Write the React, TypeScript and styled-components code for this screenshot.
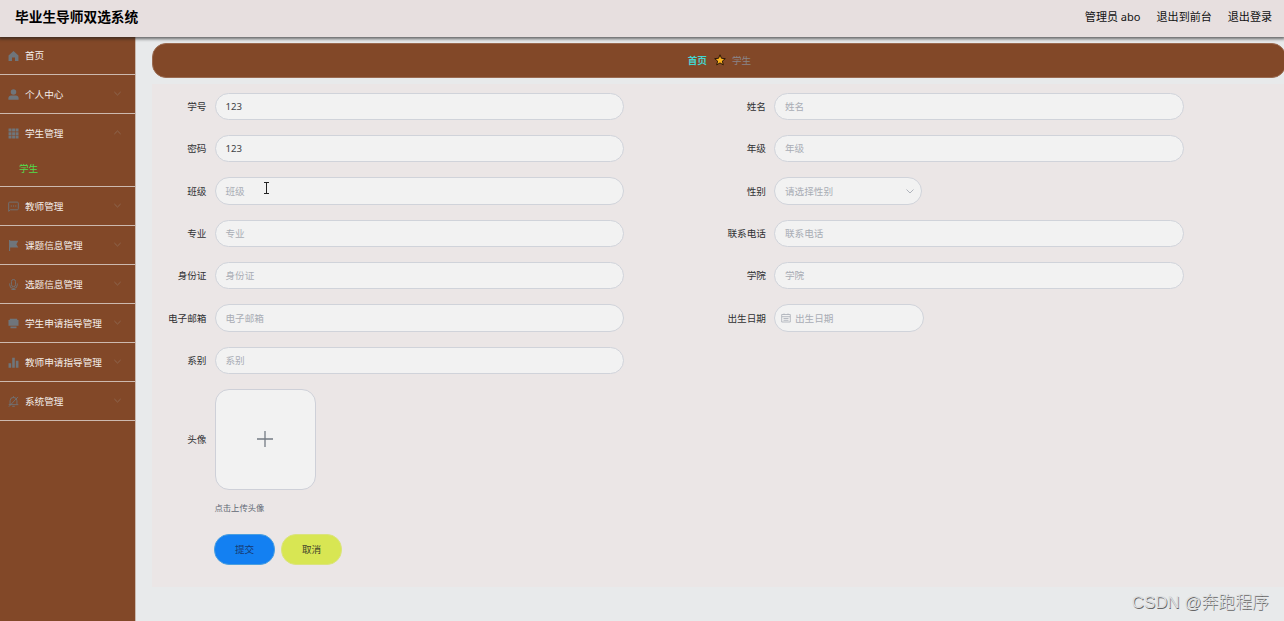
import React from "react";
import styled, { createGlobalStyle, css } from "styled-components";

const GlobalStyle = createGlobalStyle`
  * { box-sizing: border-box; }
  html, body { margin: 0; padding: 0; }
  body {
    width: 1284px;
    height: 621px;
    overflow: hidden;
    background: #e8eaeb;
    font-family: "Noto Sans", "Noto Sans CJK SC", sans-serif;
    font-size: 9.65px;
    color: #303133;
  }
`;

const Page = styled.div`
  position: relative;
  display: flex;
  flex-direction: column;
  width: 1284px;
  height: 621px;
  overflow: hidden;
`;

const Header = styled.header`
  position: relative;
  z-index: 2;
  flex: none;
  display: flex;
  align-items: center;
  justify-content: space-between;
  height: 37px;
  padding: 0 12px 4px 15px;
  background: #e7dfdf;
  box-shadow: 0 1px 3px 1px rgba(30, 30, 30, 0.65);
`;

const Title = styled.h1`
  margin: 0;
  font-size: 13.7px;
  line-height: 20px;
  font-weight: 700;
  color: #000;
`;

const HeaderLinks = styled.nav`
  display: flex;
  gap: 16px;
  font-size: 11.05px;
  line-height: 16px;
  color: #111;
`;

const Body = styled.div`
  flex: 1;
  display: flex;
  min-height: 0;
`;

const Sidebar = styled.aside`
  flex: none;
  width: 136px;
  background: #824828;
  border-right: 1px solid #c9b8ae;
`;

const MenuGroup = styled.div<{ $first?: boolean }>`
  border-bottom: 1px solid #cdb9ae;
  padding-top: ${(p) => (p.$first ? 0 : 1)}px;
`;

const MenuItem = styled.div`
  display: flex;
  align-items: center;
  height: 37px;
  padding: 0 13px 0 8px;
  color: #f4eeea;
`;

const MenuText = styled.span`
  flex: 1;
  margin-left: 6px;
  padding-bottom: 2px;
  white-space: nowrap;
`;

const SubItem = styled.div`
  height: 34px;
  padding: 9px 0 0 19px;
  line-height: 16px;
  color: #52dc4c;
`;

const Icon = styled.svg`
  flex: none;
  display: block;
  width: 11px;
  height: 11px;
  color: #6f757b;
`;

const Arrow = styled.svg<{ $up?: boolean }>`
  flex: none;
  width: 9px;
  height: 9px;
  margin-top: -3px;
  color: #8f6a54;
  transform: ${(p) => (p.$up ? "rotate(180deg)" : "none")};
`;

const Main = styled.main`
  flex: none;
  width: 1150px;
  padding: 6px 0 0 16px;
`;

const Crumbs = styled.div`
  display: flex;
  align-items: center;
  justify-content: center;
  gap: 6.5px;
  height: 35px;
  padding: 0 0 1px 1px;
  border: 1px solid #9a6a50;
  border-radius: 14px;
  background: #824828;
  color: #8a8489;
`;

const CrumbHome = styled.span`
  color: #45d5d0;
  font-weight: 700;
`;

const Star = styled.svg`
  width: 12px;
  height: 12px;
`;

const Card = styled.form`
  height: 503px;
  margin-top: 6px;
  padding: 8.5px 0 0;
  background: #ebe6e6;
`;

const Fields = styled.div`
  display: grid;
  grid-template-columns: 559.5px 559.5px;
  grid-auto-rows: 27.5px;
  row-gap: 14.85px;
`;

const Field = styled.div<{ $solo?: boolean }>`
  display: flex;
  align-items: center;
  ${(p) => p.$solo && css`grid-column: 1 / -1;`}
`;

const Label = styled.label`
  flex: none;
  width: 62.5px;
  padding: 0 8px 0.5px 0;
  text-align: right;
  white-space: nowrap;
  color: #303133;
`;

const Control = styled.div<{ $w?: number; $filled?: boolean; $icon?: boolean }>`
  display: flex;
  align-items: center;
  justify-content: space-between;
  width: ${(p) => p.$w ?? 409.5}px;
  height: 27.5px;
  padding: 0 ${(p) => (p.$icon ? 6 : 10)}px 0.5px;
  border: 1px solid #d0d3da;
  border-radius: 14px;
  background: #f2f2f2;
  color: ${(p) => (p.$filled ? "#404246" : "#a9adb5")};
`;

const DateText = styled.span`
  flex: 1;
  margin-left: 4px;
`;

const ControlIcon = styled.svg<{ $edge?: boolean }>`
  flex: none;
  width: 10px;
  height: 10px;
  margin-right: ${(p) => (p.$edge ? -4 : 0)}px;
  color: #b0b4bc;
`;

const UploadRow = styled.div`
  display: flex;
  align-items: center;
  margin-top: 15px;
`;

const Upload = styled.div`
  display: flex;
  align-items: center;
  justify-content: center;
  width: 101px;
  height: 101px;
  padding: 0 1px 1px 0;
  border: 1px solid #ced0d8;
  border-radius: 14px;
  background: #f2f2f2;
  color: #747b84;
`;

const Hint = styled.div`
  margin: 10px 0 0 62.4px;
  font-size: 8.35px;
  line-height: 16px;
  color: #606874;
`;

const Actions = styled.div`
  display: flex;
  gap: 6px;
  margin: 18px 0 0 62px;
`;

const Button = styled.button<{ $primary?: boolean }>`
  width: 61px;
  height: 31px;
  padding: 0 0 1px;
  border: 1px solid ${(p) => (p.$primary ? "#4a9fe0" : "#dbe47c")};
  border-radius: 15px;
  background: ${(p) => (p.$primary ? "#1380f2" : "#d8e653")};
  color: ${(p) => (p.$primary ? "#173a70" : "#3f432c")};
  font: inherit;
`;

const Watermark = styled.div`
  position: absolute;
  z-index: 3;
  right: 15px;
  bottom: 6px;
  font-family: "Liberation Sans", "Noto Sans CJK SC", sans-serif;
  font-size: 16.9px;
  line-height: 24px;
  white-space: nowrap;
  color: #dcdedf;
  font-weight: 300;
  text-shadow: 0.7px 0.7px 0.6px #666;
`;

const Cursor = styled.svg`
  position: absolute;
  z-index: 3;
  left: 263px;
  top: 182px;
  width: 7px;
  height: 12px;
`;

const icons: Record<string, React.ReactNode> = {
  home: <path fill="currentColor" d="M8 1.500.8 8v7.900h5V11h4.400v4.900h5V8z" />,
  user: (
    <g fill="currentColor">
      <circle cx="8" cy="4.500" r="4" />
      <path d="M.6 15.500v-2c0-2.600 1.600-3.900 4-3.900h6.800c2.400 0 4 1.300 4 3.900v2z" />
    </g>
  ),
  grid: (
    <path
      fill="currentColor"
      d="M.8.8h4.300v4.300H.8zM6 .8h4.200v4.300H6zM11 .8h4.300v4.300H11zM.8 6h4.300v4.200H.8zM6 6h4.200v4.200H6zM11 6h4.300v4.200H11zM.8 11h4.300v4.300H.8zM6 11h4.200v4.300H6zM11 11h4.300v4.300H11z"
    />
  ),
  chat: (
    <g fill="none" stroke="currentColor" strokeWidth="1.300">
      <path d="M1 15V3q0-1.400 1.400-1.400h11.200Q15 1.600 15 3v8.400q0 1.400-1.400 1.400H3.500z" />
      <path strokeWidth="1.700" d="M4 7.300h1.700M7.200 7.300h1.700M10.400 7.300h1.700" />
    </g>
  ),
  flag: <path fill="currentColor" d="M1.500 0h1.600v1.200H15l-2.800 4.800L15 10.800H3.100V16H1.500z" />,
  mic: (
    <g fill="none" stroke="currentColor" strokeWidth="1.300">
      <rect x="5" y=".7" width="6" height="10.500" rx="3" />
      <path d="M2.400 6.500v1.700a5.600 5.600 0 0 0 11.200 0V6.500M8 13.700v2M5 15.300h6" />
    </g>
  ),
  printer: (
    <path
      fill="currentColor"
      d="M2.600 1h10.800v2H15.300v8.200H13.600V9.800H2.400v1.400H.7V3h1.900zM2.400 9h11.200v2.200H2.400zM3.600 12.200h8.800v2.800H3.600z"
    />
  ),
  bars: <path fill="currentColor" d="M.8 9h3.800v6.500H.8zM6.100 1h3.800v14.500H6.100zM11.400 5.500h3.800v10h-3.800z" />,
  mute: (
    <g fill="none" stroke="currentColor" strokeWidth="1.300">
      <path d="M3 12.500V7a5 5 0 0 1 10 0v5.500M1 12.600h14M6.200 15h3.600M8 .3v2M1.300 15.500 14.500 1.300" />
    </g>
  ),
};

const menu: { icon: string; text: string; child?: string }[] = [
  { icon: "home", text: "首页" },
  { icon: "user", text: "个人中心" },
  { icon: "grid", text: "学生管理", child: "学生" },
  { icon: "chat", text: "教师管理" },
  { icon: "flag", text: "课题信息管理" },
  { icon: "mic", text: "选题信息管理" },
  { icon: "printer", text: "学生申请指导管理" },
  { icon: "bars", text: "教师申请指导管理" },
  { icon: "mute", text: "系统管理" },
];

type FieldData = { label: string; value?: string; kind?: "select" | "date"; solo?: boolean };

const fields: FieldData[] = [
  { label: "学号", value: "123" },
  { label: "姓名" },
  { label: "密码", value: "123" },
  { label: "年级" },
  { label: "班级" },
  { label: "性别", kind: "select" },
  { label: "专业" },
  { label: "联系电话" },
  { label: "身份证" },
  { label: "学院" },
  { label: "电子邮箱" },
  { label: "出生日期", kind: "date" },
  { label: "系别", solo: true },
];

function FieldControl({ label, value, kind }: FieldData) {
  if (kind === "select") {
    return (
      <Control $w={148}>
        请选择性别
        <ControlIcon viewBox="0 0 10 10" $edge>
          <path d="M1.500 3.500 5 7l3.500-3.500" fill="none" stroke="currentColor" />
        </ControlIcon>
      </Control>
    );
  }
  if (kind === "date") {
    return (
      <Control $w={150} $icon>
        <ControlIcon viewBox="0 0 10 10">
          <path
            d="M.7 1.500h8.600v7.500H.7zM.7 3.700h8.600M3 .5v1.500M7 .5v1.500M2.500 5.500h5M2.500 7.300h5"
            fill="none"
            stroke="currentColor"
            strokeWidth=".9"
          />
        </ControlIcon>
        <DateText>{label}</DateText>
      </Control>
    );
  }
  return <Control $filled={!!value}>{value ?? label}</Control>;
}

export default function App() {
  return (
    <Page>
      <GlobalStyle />
      <Header>
        <Title>毕业生导师双选系统</Title>
        <HeaderLinks>
          <span>管理员 abo</span>
          <span>退出到前台</span>
          <span>退出登录</span>
        </HeaderLinks>
      </Header>
      <Body>
        <Sidebar>
          {menu.map((m, i) => (
            <MenuGroup key={m.text} $first={i === 0}>
              <MenuItem>
                <Icon viewBox="0 0 16 16">{icons[m.icon]}</Icon>
                <MenuText>{m.text}</MenuText>
                {i > 0 && (
                  <Arrow viewBox="0 0 10 10" $up={!!m.child}>
                    <path d="M1.500 3.300 5 6.700l3.500-3.400" fill="none" stroke="currentColor" />
                  </Arrow>
                )}
              </MenuItem>
              {m.child && <SubItem>{m.child}</SubItem>}
            </MenuGroup>
          ))}
        </Sidebar>
        <Main>
          <Crumbs>
            <CrumbHome>首页</CrumbHome>
            <Star viewBox="0 0 12 12">
              <path
                d="M6 .8 7.500 4.300l3.800.3-2.900 2.500.9 3.800L6 8.900l-3.300 2 .9-3.800L.7 4.600l3.800-.3z"
                fill="#f9b01c"
                stroke="#2c1708"
                strokeLinejoin="round"
              />
            </Star>
            <span>学生</span>
          </Crumbs>
          <Card>
            <Fields>
              {fields.map((f) => (
                <Field key={f.label} $solo={f.solo}>
                  <Label>{f.label}</Label>
                  <FieldControl {...f} />
                </Field>
              ))}
            </Fields>
            <UploadRow>
              <Label>头像</Label>
              <Upload>
                <svg width="16" height="16" viewBox="0 0 16 16">
                  <path d="M8 0v16M0 8h16" stroke="currentColor" strokeWidth="1.300" />
                </svg>
              </Upload>
            </UploadRow>
            <Hint>点击上传头像</Hint>
            <Actions>
              <Button type="button" $primary>提交</Button>
              <Button type="button">取消</Button>
            </Actions>
          </Card>
        </Main>
      </Body>
      <Cursor viewBox="0 0 7 12">
        <path d="M1 .5h5M1 11.500h5M3.500 .5v11" stroke="#222" fill="none" />
      </Cursor>
      <Watermark>CSDN @奔跑程序</Watermark>
    </Page>
  );
}
